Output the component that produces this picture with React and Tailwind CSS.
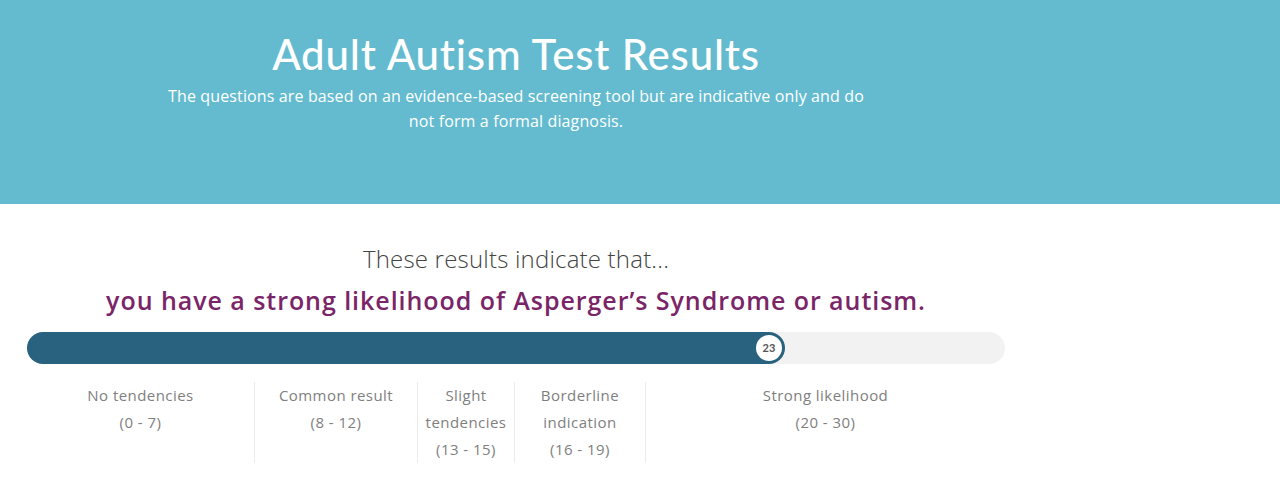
export default function App() {
  const cols = [
    { w: 228, lines: ["No tendencies", "(0 - 7)"] },
    { w: 163, lines: ["Common result", "(8 - 12)"] },
    { w: 97, lines: ["Slight", "tendencies", "(13 - 15)"] },
    { w: 131, lines: ["Borderline", "indication", "(16 - 19)"] },
    { w: 359, lines: ["Strong likelihood", "(20 - 30)"] },
  ];
  return (
    <div className="w-[1280px] min-h-[485px] bg-white">
      <div className="bg-[#64bbd0] h-[204px] w-full">
        <div className="w-[1032px] flex flex-col items-center pt-[28px]">
          <h1
            className="text-white text-[42px] leading-[52px] font-medium tracking-[0.8px]"
            style={{ fontFamily: '"Lato", sans-serif' }}
          >
            Adult Autism Test Results
          </h1>
          <p
            className="text-white text-[16px] leading-[25px] text-center w-[720px] mt-[4px] tracking-[0.13px]"
            style={{ fontFamily: '"Open Sans", sans-serif' }}
          >
            The questions are based on an evidence-based screening tool but are indicative only and do not form a formal diagnosis.
          </p>
        </div>
      </div>
      <div className="w-[1032px] px-[27px] flex flex-col items-center">
        <p
          className="mt-[40px] text-[24px] leading-[30px] font-light text-[#444] tracking-[0.2px]"
          style={{ fontFamily: '"Open Sans", sans-serif' }}
        >
          These results indicate that...
        </p>
        <p
          className="mt-[11px] text-[25px] leading-[30px] font-semibold text-[#7a2567] tracking-[0.95px]"
          style={{ fontFamily: '"Open Sans", sans-serif' }}
        >
          you have a strong likelihood of Asperger’s Syndrome or autism.
        </p>
        <div className="relative w-full h-[32px] mt-[17px] rounded-full bg-[#f2f2f2]">
          <div className="h-full w-[758px] rounded-full bg-[#28627e] flex items-center justify-end pr-[3px]">
            <div
              className="w-[26px] h-[26px] rounded-full bg-white flex items-center justify-center text-[11px] font-bold text-[#555]"
              style={{ fontFamily: '"Lato", sans-serif' }}
            >
              23
            </div>
          </div>
        </div>
        <div className="flex w-full mt-[18px]">
          {cols.map((c, i) => (
            <div
              key={i}
              className={`flex flex-col items-center h-[81px] ${i < cols.length - 1 ? "border-r border-[#ececec]" : ""}`}
              style={{ width: c.w, fontFamily: '"Open Sans", sans-serif' }}
            >
              {c.lines.map((l, j) => (
                <div key={j} className="text-[15px] leading-[27px] text-[#808080] text-center whitespace-nowrap tracking-[0.45px]">
                  {l}
                </div>
              ))}
            </div>
          ))}
        </div>
      </div>
    </div>
  );
}
